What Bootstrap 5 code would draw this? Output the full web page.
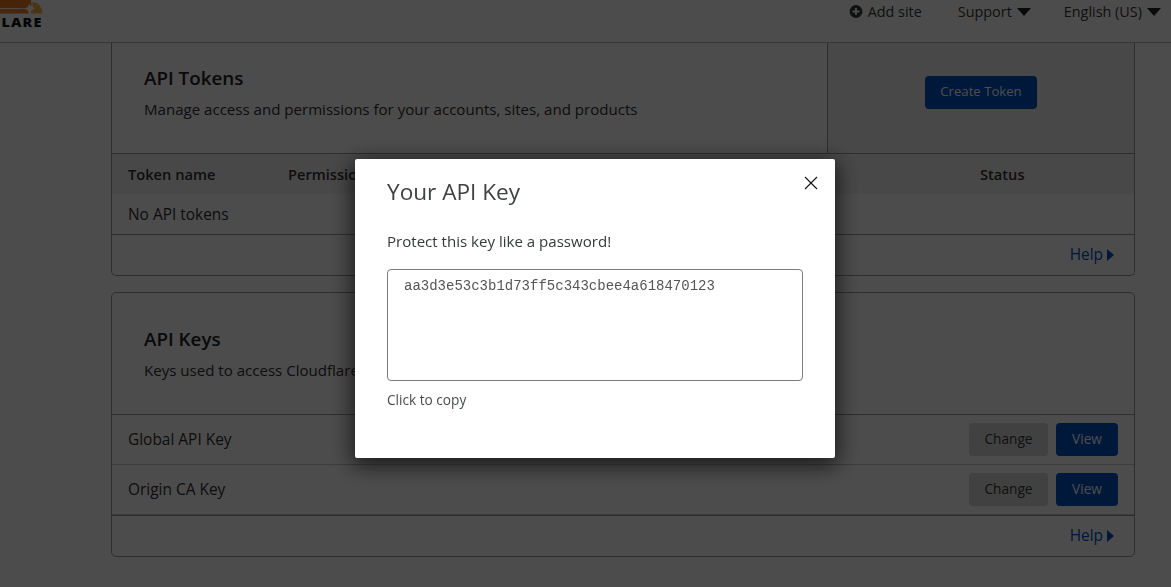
<!DOCTYPE html>
<html lang="en">
<head>
<meta charset="utf-8">
<meta name="viewport" content="width=device-width, initial-scale=1">
<title>API Tokens</title>
<link href="https://cdn.jsdelivr.net/npm/bootstrap@5.3.0/dist/css/bootstrap.min.css" rel="stylesheet">
<style>
body{font-family:"Open Sans",sans-serif;font-size:15.07px;line-height:24px;color:#313131;background:#fff;height:100vh;overflow:hidden}
.topbar{height:43px;border-bottom:1px solid #b8b8b8}
.topbar-links{font-size:14.4px;padding-right:10px;color:#36393a}
.nav-item-site{margin-right:36px;gap:5px}
.nav-item-support{margin-right:33px;gap:5px}
.nav-item-lang{gap:5px}
.caret-down{border:7px solid transparent;border-top:8px solid #222;border-bottom:0}
.caret-right{border:6.5px solid transparent;border-left:7px solid #0051c3;border-right:0}
.panel{width:1024px;margin-left:111px;border:1px solid #999b9e;border-radius:5px}
.panel-cut{border-top:0;border-radius:0 0 5px 5px}
.line-b{border-bottom:1px solid #999b9e}
.line-soft{border-bottom:1px solid #c9c9cb}
.panel-title{font-size:18.8px;font-weight:600;line-height:28px;color:#222;margin-bottom:5px}
.intro{padding-left:32px}
.intro-first{padding-top:21px}
.intro-second{padding-top:32px}
.side{width:307px;padding-top:33px;border-left:1px solid #999b9e;background:#f1f1f1}
.thead-row{height:40px;background:#f2f2f2;font-weight:600;font-size:14.65px}
.col-a{width:160px}
.col-b{width:692px}
.entry{font-size:15.45px}
.key-row{height:50px}
.key-label{padding-bottom:2px}
.foot{height:40px;padding-right:20px}
.help{color:#0051c3;gap:4px;font-size:15.4px}
.act{height:33px;border:0;border-radius:4px;padding:0 0 2px;font-size:13.65px;line-height:31px}
.act-main{background:#0051c3;color:#fff}
.act-main:hover{background:#0045a6;color:#fff}
.act-gray{background:#d9d9d9;color:#36393a;width:79px}
.w-view{width:62px}
.w-create{width:112px;font-size:13.15px}
.veil{background:rgba(0,0,0,.7);padding:159px 0 0 355px}
.dialog-box{width:480px;height:299px;background:#fff;border-radius:2px;padding:0 32px;color:#36393a;box-shadow:0 5px 22px 3px rgba(0,0,0,.65)}
.dialog-title{font-size:22.6px;line-height:32px;padding-top:17px;margin:0;font-weight:400;color:#404242}
.dialog-note{padding:21px 0 16px}
.key-area{height:112px;border:1px solid #7c7c7c;border-radius:4px;padding:6px 16px;font:14px/20px "Liberation Mono",monospace;color:#555;resize:none;display:block}
.copy-hint{font-size:13.65px;line-height:20px;margin-top:9px;color:#4a4c4d}
.x-btn{padding:0;border:0;background:none;width:14px;height:14px;line-height:0;margin:17px -15px 0 0}
</style>
</head>
<body>
<header class="topbar d-flex justify-content-between align-items-start overflow-hidden">
  <svg width="46" height="30" viewBox="0 0 46 30" aria-label="Cloudflare">
    <path d="M0 0H31L31.5 5Q31 8 28 8.2H0Z" fill="#ee7b18"/>
    <path d="M0 9H25Q28 9.5 28.6 12V13.6H0Z" fill="#f38020"/>
    <path d="M0 7.9H21V9.1H0Z" fill="#fff" opacity=".6"/>
    <path d="M32.5 2Q42 3 42.3 13.6H30.5Q31 9.5 35 8.3Q31.5 7 32.5 2Z" fill="#fbad41"/>
    <path d="M29.5 3.6Q30.4 7.6 34.6 8.6Q30.4 9.6 29.5 13.6Q28.6 9.6 24.4 8.6Q28.6 7.6 29.5 3.6Z" fill="#fff"/>
    <text x="1.5" y="26.8" font-family="Open Sans, sans-serif" font-weight="800" font-size="12.8" textLength="41" lengthAdjust="spacingAndGlyphs" letter-spacing="1" fill="#111">LARE</text>
  </svg>
  <nav class="topbar-links d-flex">
    <span class="nav-item-site d-flex align-items-center"><svg width="14" height="14" viewBox="0 0 14 14"><circle cx="7" cy="6.5" r="6.4" fill="#36393a"/><path d="M7 3v7M3.5 6.5h7" stroke="#fff" stroke-width="1.8"/></svg>Add site</span>
    <span class="nav-item-support d-flex align-items-center">Support<i class="caret-down"></i></span>
    <span class="nav-item-lang d-flex align-items-center">English (US)<i class="caret-down"></i></span>
  </nav>
</header>

<main>
  <section class="panel panel-cut mb-3">
    <div class="d-flex line-b" style="height:111px">
      <div class="intro intro-first flex-grow-1">
        <h2 class="panel-title">API Tokens</h2>
        <p class="m-0">Manage access and permissions for your accounts, sites, and products</p>
      </div>
      <div class="side d-flex justify-content-center"><button class="btn act act-main w-create">Create Token</button></div>
    </div>
    <div class="thead-row d-flex align-items-center px-3"><div class="col-a">Token name</div><div class="col-b">Permissions</div><div>Status</div></div>
    <div class="entry line-b px-3 d-flex align-items-center" style="height:41px">No API tokens</div>
    <div class="foot d-flex align-items-center justify-content-end"><a class="help d-flex align-items-center text-decoration-none" href="#">Help<i class="caret-right"></i></a></div>
  </section>

  <section class="panel">
    <div class="line-b intro intro-second" style="height:122px">
      <h2 class="panel-title">API Keys</h2>
      <p class="m-0">Keys used to access Cloudflare APIs.</p>
    </div>
    <div class="key-row line-soft d-flex align-items-center gap-2 px-3"><span class="key-label entry me-auto">Global API Key</span><button class="btn act act-gray">Change</button><button class="btn act act-main w-view">View</button></div>
    <div class="key-row line-soft d-flex align-items-center gap-2 px-3"><span class="key-label entry me-auto">Origin CA Key</span><button class="btn act act-gray">Change</button><button class="btn act act-main w-view">View</button></div>
    <div class="line-b"></div>
    <div class="foot d-flex align-items-center justify-content-end"><a class="help d-flex align-items-center text-decoration-none" href="#">Help<i class="caret-right"></i></a></div>
  </section>
</main>

<div class="veil position-fixed top-0 start-0 w-100 h-100">
  <div class="dialog-box" role="dialog" aria-label="Your API Key">
    <div class="d-flex justify-content-between align-items-start">
      <h1 class="dialog-title">Your API Key</h1>
      <button class="x-btn" aria-label="Close"><svg width="14" height="14" viewBox="0 0 14 14"><path d="M1 1L13 13M13 1L1 13" stroke="#111" stroke-width="1.1"/></svg></button>
    </div>
    <p class="dialog-note mb-0">Protect this key like a password!</p>
    <textarea class="key-area w-100" readonly spellcheck="false">aa3d3e53c3b1d73ff5c343cbee4a618470123</textarea>
    <div class="copy-hint">Click to copy</div>
  </div>
</div>
<script src="https://cdn.jsdelivr.net/npm/bootstrap@5.3.0/dist/js/bootstrap.bundle.min.js"></script>
</body>
</html>
